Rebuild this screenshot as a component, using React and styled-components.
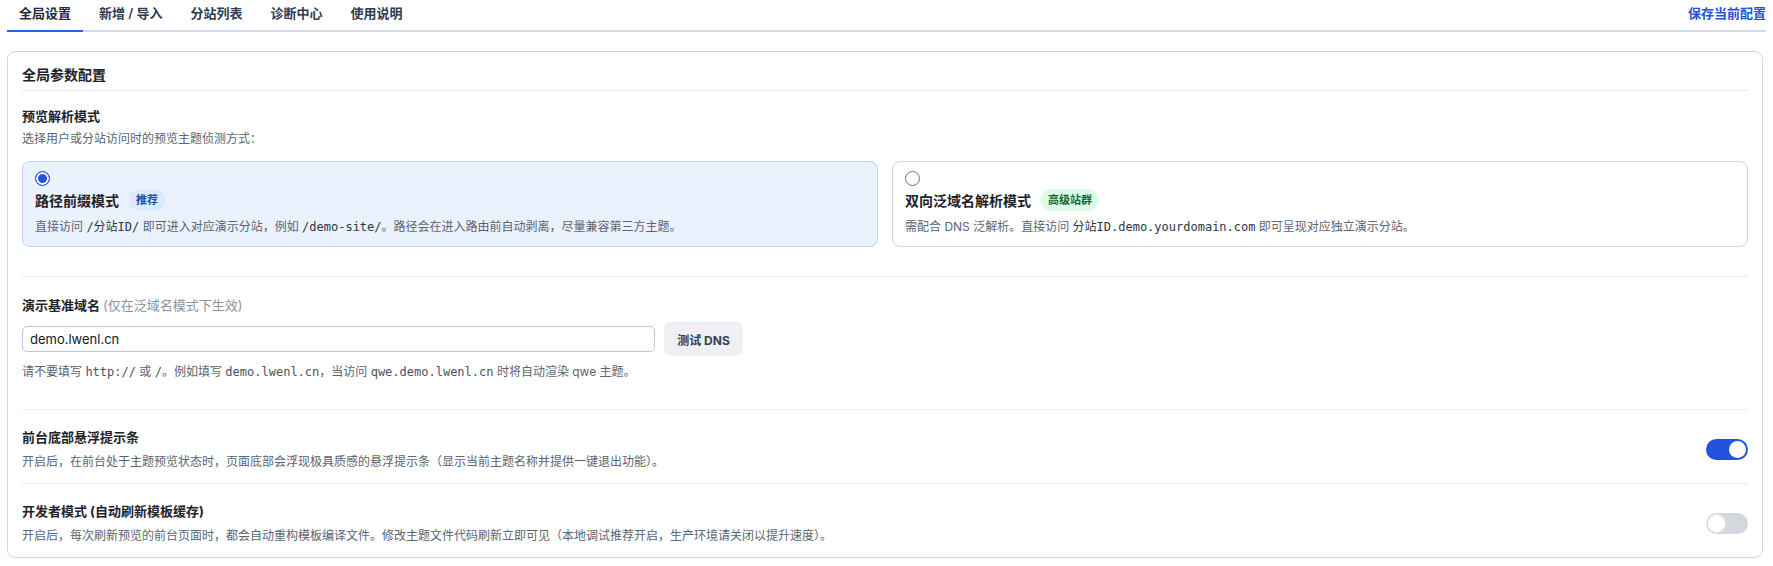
import React from 'react';
import styled, { createGlobalStyle } from 'styled-components';

const GlobalStyle = createGlobalStyle`
  * { box-sizing: border-box; }
  body {
    margin: 0;
    background: #fff;
    font-family: Inter, "Noto Sans CJK SC", sans-serif;
    color: #1f2329;
  }
`;

const sans = `Inter, "Noto Sans CJK SC", sans-serif`;
const mono = `"DejaVu Sans Mono", "Noto Sans CJK SC", monospace`;

const Page = styled.div`
  padding: 0 7px;
`;

const TabBar = styled.div`
  display: flex;
  align-items: flex-start;
  justify-content: space-between;
  border-bottom: 2px solid #d3dae5;
`;

const Tabs = styled.nav`
  display: flex;
  gap: 4px;
`;

const Tab = styled.button`
  padding: 4px 12px 8px;
  margin-bottom: -2px;
  border: none;
  border-bottom: 2px solid ${(p) => (p.$active ? '#2563eb' : 'transparent')};
  background: none;
  font: 600 13px/18px ${sans};
  color: ${(p) => (p.$active ? '#1e293b' : '#2f3b4f')};
  cursor: pointer;
`;

const SaveLink = styled.button`
  padding: 4px 0 0;
  border: none;
  background: none;
  font: 700 13px/18px ${sans};
  color: #2454d6;
  cursor: pointer;
`;

const Card = styled.section`
  margin: 19px 3px 0 0;
  padding: 13px 14px 0;
  border: 1px solid #cfd7e4;
  border-radius: 8px;
`;

const CardTitle = styled.h2`
  margin: 0;
  padding-bottom: 5px;
  border-bottom: 1px solid #e2e7ef;
  font-size: 14px;
  line-height: 20px;
  font-weight: 700;
  color: #1d2129;
`;

const Section = styled.div`
  padding: ${(p) => p.$pad};
  border-bottom: ${(p) => (p.$last ? 'none' : '1px solid #eceff4')};
`;

const Label = styled.div`
  font-size: 13px;
  line-height: 18px;
  font-weight: 700;
  color: #1f2329;
`;

const Muted = styled.span`
  font-weight: 400;
  color: #8a94a6;
`;

const Desc = styled.div`
  margin-top: ${(p) => p.$gap || 0}px;
  font-size: 12px;
  line-height: 18px;
  color: #5b6470;
`;

const Code = styled.code`
  font-family: ${mono};
  font-size: 12px;
  color: ${(p) => (p.$strong ? '#2f3642' : '#4b5361')};
`;

const OptionGrid = styled.div`
  margin-top: 13px;
  display: grid;
  grid-template-columns: 1fr 1fr;
  gap: 14px;
`;

const OptionCard = styled.label`
  display: block;
  padding: 9px 12px 10px;
  border: 1px solid ${(p) => (p.$checked ? '#bcd3f5' : '#cfd7e4')};
  border-radius: 8px;
  background: ${(p) => (p.$checked ? '#eaf2fe' : '#fff')};
  cursor: pointer;
`;

const Radio = styled.span`
  display: block;
  width: 15px;
  height: 15px;
  border-radius: 50%;
  border: ${(p) => (p.$checked ? '1.5px solid #2352e0' : '1px solid #6b7280')};
  background: ${(p) => (p.$checked ? '#2352e0' : '#fff')};
  box-shadow: ${(p) => (p.$checked ? 'inset 0 0 0 2px #fff' : 'none')};
`;

const OptionTitleRow = styled.div`
  margin-top: 3px;
  height: 22px;
  display: flex;
  align-items: center;
  gap: 10px;
`;

const OptionTitle = styled.span`
  font-size: 14px;
  font-weight: 700;
  color: #1d2129;
`;

const Badge = styled.span`
  height: 22px;
  padding: 0 7px;
  border-radius: 11px;
  font: 600 11px/22px ${sans};
  background: ${(p) => (p.$tone === 'green' ? '#dcfce7' : '#dbeafe')};
  color: ${(p) => (p.$tone === 'green' ? '#166534' : '#1e4f9c')};
`;

const InputRow = styled.div`
  margin-top: 8px;
  display: flex;
  align-items: center;
  gap: 9px;
`;

const Input = styled.input`
  width: 633px;
  height: 26px;
  padding: 0 7px;
  border: 1px solid #b9c7dc;
  border-radius: 5px;
  font: 400 13px ${sans};
  color: #111827;
  outline: none;
`;

const Button = styled.button`
  width: 79px;
  height: 34px;
  border: none;
  border-radius: 7px;
  background: #eef0f3;
  font: 700 12px ${sans};
  color: #374151;
  cursor: pointer;
`;

const ToggleRow = styled(Section)`
  display: flex;
  align-items: center;
  justify-content: space-between;
`;

const Toggle = styled.span`
  position: relative;
  flex: none;
  width: 42px;
  height: 21px;
  border-radius: 11px;
  background: ${(p) => (p.$on ? '#2352e0' : '#d4d8de')};

  &::after {
    content: '';
    position: absolute;
    top: 2px;
    left: ${(p) => (p.$on ? '23px' : '2px')};
    width: 17px;
    height: 17px;
    border-radius: 50%;
    background: #fff;
    box-shadow: ${(p) => (p.$on ? 'none' : '0 0 0 1px #e3e6ea')};
  }
`;

const tabs = ['全局设置', '新增 / 导入', '分站列表', '诊断中心', '使用说明'];

const App = () => (
  <Page>
    <GlobalStyle />
    <TabBar>
      <Tabs>
        {tabs.map((t, i) => (
          <Tab key={t} $active={i === 0}>{t}</Tab>
        ))}
      </Tabs>
      <SaveLink>保存当前配置</SaveLink>
    </TabBar>

    <Card>
      <CardTitle>全局参数配置</CardTitle>

      <Section $pad="16px 0 29px">
        <Label>预览解析模式</Label>
        <Desc $gap={5}>选择用户或分站访问时的预览主题侦测方式：</Desc>
        <OptionGrid>
          <OptionCard $checked>
            <Radio $checked />
            <OptionTitleRow>
              <OptionTitle>路径前缀模式</OptionTitle>
              <Badge>推荐</Badge>
            </OptionTitleRow>
            <Desc $gap={7}>
              直接访问 <Code $strong>/分站ID/</Code> 即可进入对应演示分站，例如 <Code $strong>/demo-site/</Code>。路径会在进入路由前自动剥离，尽量兼容第三方主题。
            </Desc>
          </OptionCard>
          <OptionCard>
            <Radio />
            <OptionTitleRow>
              <OptionTitle>双向泛域名解析模式</OptionTitle>
              <Badge $tone="green">高级站群</Badge>
            </OptionTitleRow>
            <Desc $gap={7}>
              需配合 DNS 泛解析。直接访问 <Code $strong>分站ID.demo.yourdomain.com</Code> 即可呈现对应独立演示分站。
            </Desc>
          </OptionCard>
        </OptionGrid>
      </Section>

      <Section $pad="19px 0 28px">
        <Label>
          演示基准域名 <Muted>(仅在泛域名模式下生效)</Muted>
        </Label>
        <InputRow>
          <Input defaultValue="demo.lwenl.cn" />
          <Button>测试 DNS</Button>
        </InputRow>
        <Desc $gap={7}>
          请不要填写 <Code>http://</Code> 或 <Code>/</Code>。例如填写 <Code>demo.lwenl.cn</Code>，当访问 <Code>qwe.demo.lwenl.cn</Code> 时将自动渲染 qwe 主题。
        </Desc>
      </Section>

      <ToggleRow $pad="18px 0 12px">
        <div>
          <Label>前台底部悬浮提示条</Label>
          <Desc $gap={7}>开启后，在前台处于主题预览状态时，页面底部会浮现极具质感的悬浮提示条（显示当前主题名称并提供一键退出功能）。</Desc>
        </div>
        <Toggle $on />
      </ToggleRow>

      <ToggleRow $pad="18px 0 12px" $last>
        <div>
          <Label>开发者模式 (自动刷新模板缓存)</Label>
          <Desc $gap={7}>开启后，每次刷新预览的前台页面时，都会自动重构模板编译文件。修改主题文件代码刷新立即可见（本地调试推荐开启，生产环境请关闭以提升速度）。</Desc>
        </div>
        <Toggle />
      </ToggleRow>
    </Card>
  </Page>
);

export default App;
